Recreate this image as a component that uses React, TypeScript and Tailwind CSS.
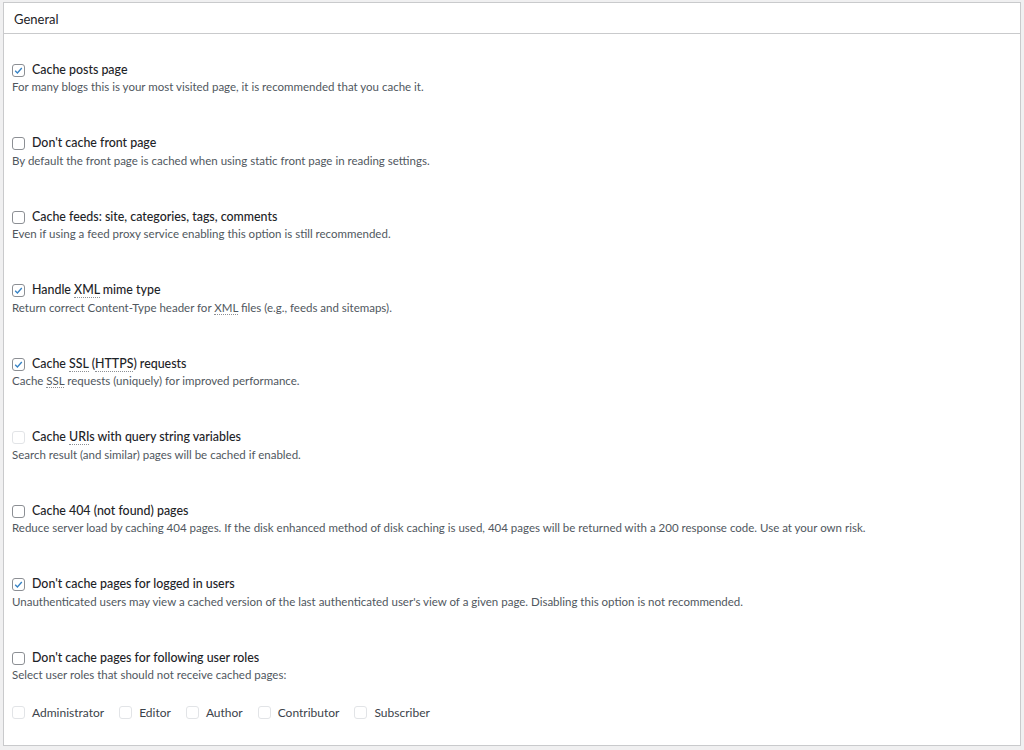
import React from 'react';

type Option = {
  label: React.ReactNode;
  desc: React.ReactNode;
  checked?: boolean;
  disabled?: boolean;
};

const Abbr = ({ children }: { children: React.ReactNode }) => (
  <abbr className="no-underline border-b border-dotted border-[#8c8f94]">{children}</abbr>
);

const options: Option[] = [
  {
    label: 'Cache posts page',
    desc: 'For many blogs this is your most visited page, it is recommended that you cache it.',
    checked: true,
  },
  {
    label: "Don't cache front page",
    desc: 'By default the front page is cached when using static front page in reading settings.',
  },
  {
    label: 'Cache feeds: site, categories, tags, comments',
    desc: 'Even if using a feed proxy service enabling this option is still recommended.',
  },
  {
    label: (
      <>
        Handle <Abbr>XML</Abbr> mime type
      </>
    ),
    desc: (
      <>
        Return correct Content-Type header for <Abbr>XML</Abbr> files (e.g., feeds and sitemaps).
      </>
    ),
    checked: true,
  },
  {
    label: (
      <>
        Cache <Abbr>SSL</Abbr> (<Abbr>HTTPS</Abbr>) requests
      </>
    ),
    desc: (
      <>
        Cache <Abbr>SSL</Abbr> requests (uniquely) for improved performance.
      </>
    ),
    checked: true,
  },
  {
    label: (
      <>
        Cache <Abbr>URI</Abbr>s with query string variables
      </>
    ),
    desc: 'Search result (and similar) pages will be cached if enabled.',
    disabled: true,
  },
  {
    label: 'Cache 404 (not found) pages',
    desc: 'Reduce server load by caching 404 pages. If the disk enhanced method of disk caching is used, 404 pages will be returned with a 200 response code. Use at your own risk.',
  },
  {
    label: "Don't cache pages for logged in users",
    desc: "Unauthenticated users may view a cached version of the last authenticated user's view of a given page. Disabling this option is not recommended.",
    checked: true,
  },
  {
    label: "Don't cache pages for following user roles",
    desc: 'Select user roles that should not receive cached pages:',
  },
];

const roles = ['Administrator', 'Editor', 'Author', 'Contributor', 'Subscriber'];

// checkbox look from wp-admin
function Box({ checked, disabled }: { checked?: boolean; disabled?: boolean }) {
  return (
    <span
      className={
        'w-[13px] h-[13px] rounded-[3px] border bg-white flex items-center justify-center shrink-0 ' +
        (disabled ? 'border-[#e2e4e7]' : 'border-[#8c8f94]')
      }
    >
      {checked && (
        <svg width="11" height="11" viewBox="0 0 20 20">
          <path d="M4 10.5l4 4 8-9" fill="none" stroke="#3582c4" strokeWidth="2.4" />
        </svg>
      )}
    </span>
  );
}

export default function App() {
  return (
    <div
      className="min-h-[750px] bg-[#f0f0f1] pt-[2px] pl-[3px] pr-[3px] pb-[4px]"
      style={{ fontFamily: 'Lato, "Noto Sans", sans-serif' }}
    >
      <div className="w-[1018px] h-[744px] bg-white border border-[#c9cacc] flex flex-col">
        <div className="h-[31px] border-b border-[#c9cacc] px-[10px] pt-[3px] flex items-center text-[13px] text-[#1d2327]">
          General
        </div>

        <div className="pt-[27px] pl-[8px]">
          {options.map((o, i) => (
            <div key={i} className="h-[73.5px]">
              <label className="flex items-center gap-[7px] h-[18px] text-[12.4px] font-medium text-[#1d2327]">
                <Box checked={o.checked} disabled={o.disabled} />
                <span>{o.label}</span>
              </label>
              <p className="text-[11.5px] leading-[16px] text-[#50575e]">{o.desc}</p>
            </div>
          ))}

          <div className="flex items-center h-[18px] -mt-[19px] text-[12px] text-[#3c434a]">
            {roles.map((r) => (
              <label key={r} className="flex items-center gap-[7px] mr-[15px]">
                <Box disabled />
                <span>{r}</span>
              </label>
            ))}
          </div>
        </div>
      </div>
    </div>
  );
}
